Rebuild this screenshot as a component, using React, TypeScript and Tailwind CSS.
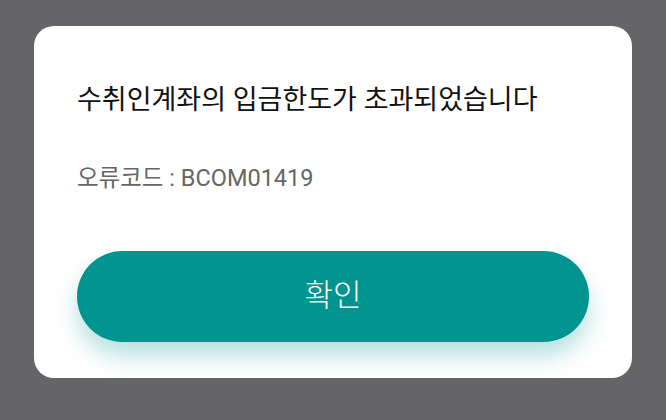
export default function App() {
  return (
    <div className="w-[666px] h-[420px] bg-[#656567] flex items-start justify-center pt-[26px] font-['Roboto','Noto_Sans_CJK_KR',sans-serif]">
      <div className="w-[598px] h-[352px] bg-white rounded-[20px] flex flex-col pl-[43px] pr-[43px] pt-[55px]">
        <h1 className="text-[27px] leading-[38px] text-[#111111] font-normal">
          수취인계좌의 입금한도가 초과되었습니다
        </h1>
        <p className="mt-[42px] text-[23.5px] leading-[34px] text-[#666666]">
          오류코드 : BCOM01419
        </p>
        <button className="mt-[56px] h-[91px] w-full rounded-full bg-[#009490] text-white text-[31px] font-light shadow-[0_14px_22px_rgba(0,148,144,0.28)]">
          확인
        </button>
      </div>
    </div>
  );
}
